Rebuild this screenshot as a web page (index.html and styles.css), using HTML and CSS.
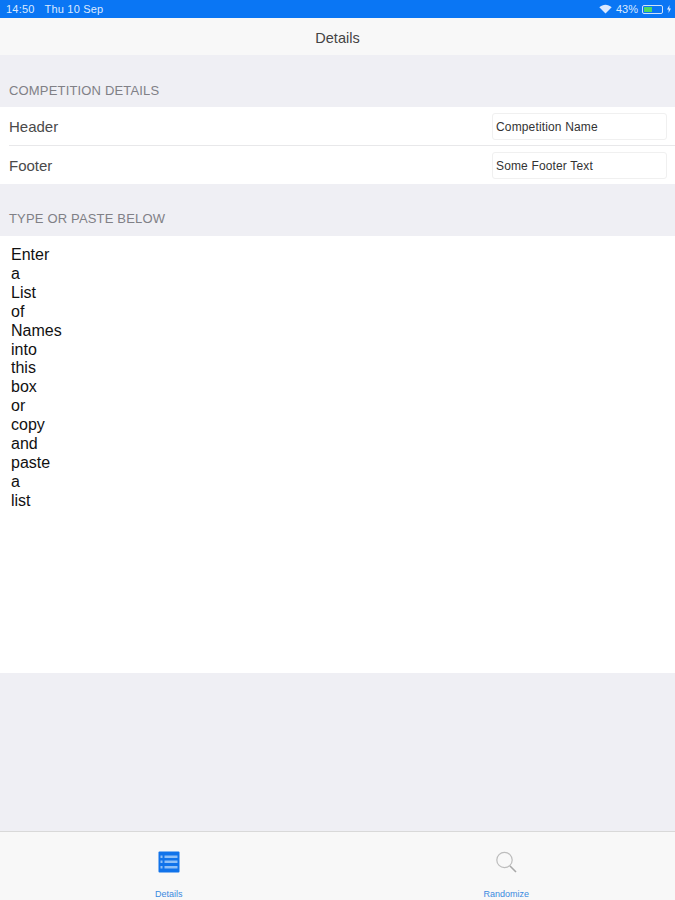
FILE: index.html
```html
<!DOCTYPE html>
<html lang="en">
<head>
<meta charset="utf-8">
<title>Details</title>
<link rel="stylesheet" href="styles.css">
</head>
<body>
<div class="app">
  <div class="status">
    <div class="status-left"><span>14:50</span><span>Thu 10 Sep</span></div>
    <div class="status-right">
      <svg class="wifi" width="13" height="10" viewBox="0 0 13 10"><path d="M6.5 9.5 0.3 3.2C3.9-.2 9.100-.2 12.700 3.200Z" fill="#dbe9ff"/></svg>
      <span>43%</span>
      <span class="battery"><span class="battery-fill"></span></span>
      <svg class="bolt" width="4" height="8" viewBox="0 0 4 8"><path d="M2.500 0 0 4.500H1.700L1.500 8 4 3.500H2.300Z" fill="#dbe9ff"/></svg>
    </div>
  </div>
  <div class="nav">Details</div>
  <div class="section-head first">COMPETITION DETAILS</div>
  <div class="group">
    <div class="row"><span class="row-label">Header</span><span class="field">Competition Name</span></div>
    <div class="divider"></div>
    <div class="row"><span class="row-label">Footer</span><span class="field">Some Footer Text</span></div>
  </div>
  <div class="section-head second">TYPE OR PASTE BELOW</div>
  <div class="editor">
    <div>Enter</div><div>a</div><div>List</div><div>of</div><div>Names</div><div>into</div><div>this</div><div>box</div><div>or</div><div>copy</div><div>and</div><div>paste</div><div>a</div><div>list</div>
  </div>
  <div class="spacer"></div>
  <div class="tabbar">
    <div class="tab">
      <svg width="22" height="22" viewBox="0 0 22 22"><rect x="0.500" y="0.500" width="21" height="21" rx="1" fill="#1173ea"/><g fill="#8fc0f7"><rect x="2.500" y="4.500" width="2" height="2.500"/><rect x="2.500" y="9.500" width="2" height="2.500"/><rect x="2.500" y="15" width="2" height="2.500"/><rect x="6.500" y="4.500" width="13" height="2.500"/><rect x="6.500" y="9.500" width="13" height="2.500"/><rect x="6.500" y="15" width="13" height="2.500"/></g></svg>
      <span class="tab-label">Details</span>
    </div>
    <div class="tab">
      <svg width="22" height="22" viewBox="0 0 22 22"><circle cx="9.500" cy="9" r="7.700" fill="none" stroke="#bdbdbd" stroke-width="1.200"/><path d="M15 15 21 21" stroke="#a8a8a8" stroke-width="1.600" fill="none"/></svg>
      <span class="tab-label">Randomize</span>
    </div>
  </div>
</div>
</body>
</html>
```
FILE: styles.css
```css
* { box-sizing: border-box; }
html, body { margin: 0; padding: 0; }
body { font-family: "Liberation Sans", Arial, sans-serif; background: #efeff4; }
.app { width: 675px; height: 900px; display: flex; flex-direction: column; overflow: hidden; background: #efeff4; }
.status { height: 18px; background: #0a76f4; color: #dbe9ff; font-size: 11px; display: flex; justify-content: space-between; align-items: center; padding: 0 4px 0 6px; flex: none; }
.status-left { display: flex; gap: 10px; letter-spacing: 0.200px; }
.status-right { display: flex; align-items: center; gap: 4px; }
.battery { width: 21px; height: 9px; border: 1px solid #cfe2fb; border-radius: 2px; padding: 1px; display: flex; }
.battery-fill { width: 8px; background: #4cd964; }
.nav { height: 37px; padding-top: 2px; background: #f8f8f8; display: flex; align-items: center; justify-content: center; font-size: 14.500px; color: #444; flex: none; }
.section-head { height: 52px; padding: 0 9px 9px; display: flex; align-items: flex-end; font-size: 13px; letter-spacing: 0.170px; color: #808086; flex: none; }
.section-head.second { padding-bottom: 10px; }
.group { background: #fff; flex: none; }
.row { height: 38px; display: flex; align-items: center; justify-content: space-between; padding: 0 8px 0 9px; }
.row-label { font-size: 15px; color: #4a4a4a; }
.field { width: 175px; height: 27px; border: 1px solid #f0f0f0; border-radius: 3px; background: #fff; display: flex; align-items: center; padding: 1px 3px 0; font-size: 12px; letter-spacing: 0.150px; color: #333; }
.divider { height: 1px; background: #e8e8ea; margin-left: 9px; }
.editor { height: 437px; background: #fff; padding: 10px 11px; font-size: 16px; line-height: 18.900px; color: #111; flex: none; }
.spacer { flex: 1; }
.tabbar { height: 69px; background: #f8f8f8; border-top: 1px solid #d9d9d9; display: flex; flex: none; }
.tab { flex: 1; display: flex; flex-direction: column; align-items: center; padding-top: 19px; gap: 17px; }
.tab-label { font-size: 9px; line-height: 9px; color: #3a8ae0; }
```
